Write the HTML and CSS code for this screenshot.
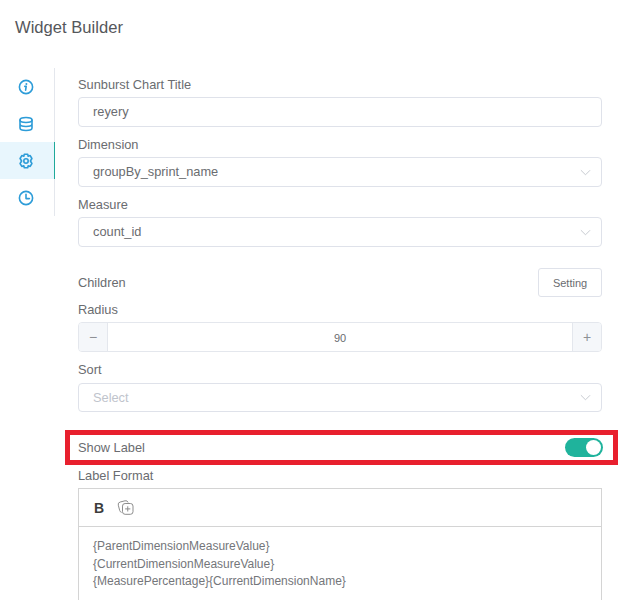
FILE: index.html
```html
<!DOCTYPE html>
<html lang="en">
<head>
<meta charset="utf-8">
<title>Widget Builder</title>
<link rel="stylesheet" href="styles.css">
</head>
<body>
<div class="page">
  <h1 class="title">Widget Builder</h1>
  <div class="builder">
    <nav class="side">
      <div class="side-item">
        <svg class="ico" viewBox="0 0 16 16"><circle cx="8" cy="8" r="6.6"/><path d="M8.200 7.400l-.6 3.800M6.800 7.400h1.400"/><circle class="dot" cx="8.400" cy="4.900" r="1"/></svg>
      </div>
      <div class="side-item">
        <svg class="ico" viewBox="0 0 16 16"><ellipse cx="8" cy="4" rx="6" ry="2.500"/><path d="M2 4v8c0 1.400 2.700 2.500 6 2.500s6-1.100 6-2.500V4M2 8c0 1.400 2.700 2.500 6 2.500S14 9.400 14 8"/></svg>
      </div>
      <div class="side-item active">
        <svg class="ico" viewBox="0 0 16 16"><path d="M6.300 1.200H9.700L10.200 3.200 12.200 2.600 13.900 5.500 12.400 8 13.900 10.500 12.200 13.400 10.200 12.800 9.700 14.800H6.300L5.800 12.800 3.800 13.400 2.100 10.500 3.600 8 2.100 5.500 3.800 2.600 5.800 3.200Z"/><circle cx="8" cy="8" r="2.200"/></svg>
      </div>
      <div class="side-item">
        <svg class="ico" viewBox="0 0 16 16"><circle cx="8" cy="8" r="6.600"/><path d="M8 4.300V8.600H11.400"/></svg>
      </div>
    </nav>
    <form class="form">
      <div class="field">
        <label class="label">Sunburst Chart Title</label>
        <div class="box">reyery</div>
      </div>
      <div class="field">
        <label class="label">Dimension</label>
        <div class="box select">groupBy_sprint_name<svg class="chev" viewBox="0 0 12 7"><path d="M1 1l5 5 5-5"/></svg></div>
      </div>
      <div class="field">
        <label class="label">Measure</label>
        <div class="box select">count_id<svg class="chev" viewBox="0 0 12 7"><path d="M1 1l5 5 5-5"/></svg></div>
      </div>
      <div class="children">
        <span class="label">Children</span>
        <button type="button" class="btn">Setting</button>
      </div>
      <div class="field radius">
        <label class="label">Radius</label>
        <div class="stepper">
          <span class="step minus">&minus;</span>
          <span class="value">90</span>
          <span class="step plus">+</span>
        </div>
      </div>
      <div class="field sort">
        <label class="label">Sort</label>
        <div class="box select placeholder">Select<svg class="chev" viewBox="0 0 12 7"><path d="M1 1l5 5 5-5"/></svg></div>
      </div>
      <div class="show-label">
        <span class="label">Show Label</span>
        <span class="switch"><span class="knob"></span></span>
      </div>
      <div class="format">
        <label class="label">Label Format</label>
        <div class="editor">
          <div class="toolbar">
            <b class="bold">B</b>
            <svg class="copy" viewBox="0 0 17 15"><path d="M4.600 12.400a2.600 2.600 0 0 1-1.900-1.900L1.300 5.200A2.600 2.600 0 0 1 3.200 2L8 .8a2.600 2.600 0 0 1 3.100 1.700"/><rect x="5.500" y="3.500" width="10.500" height="10.800" rx="2.600"/><path d="M10.750 6.300v5.200M8.150 8.900h5.200"/></svg>
          </div>
          <div class="content">
            <div>{ParentDimensionMeasureValue}</div>
            <div>{CurrentDimensionMeasureValue}</div>
            <div>{MeasurePercentage}{CurrentDimensionName}</div>
          </div>
        </div>
      </div>
    </form>
  </div>
</div>
</body>
</html>
```
FILE: styles.css
```css
* { box-sizing: border-box; }
html, body { margin: 0; height: 100%; overflow: hidden; background: #fff; }
body { font-family: "Liberation Sans", Arial, sans-serif; color: #6a6c70; }
.page { height: 600px; overflow: hidden; padding: 19px 0 0; }
.title { margin: 0 0 0 15px; font-size: 16.600px; line-height: 18px; font-weight: 400; color: #55575b; }
.builder { display: flex; margin-top: 31px; align-items: flex-start; }
.side { width: 55px; flex: none; border-right: 1px solid #e4e7ed; }
.side-item { height: 37px; display: flex; align-items: center; justify-content: center; margin-right: -1px; padding-right: 3px; border-right: 1px solid transparent; }
.side-item.active { background: #e8f6fd; border-right-color: #1fa99a; }
.ico { width: 16px; height: 16px; fill: none; stroke: #2d9cd8; stroke-width: 1.600; stroke-linejoin: round; stroke-linecap: round; }
.ico .dot { fill: #2d9cd8; stroke: none; }
.form { flex: none; width: 524px; margin-left: 23px; padding-top: 10px; }
.label { display: block; font-size: 12.800px; line-height: 14px; color: #6a6c70; }
.field { display: flex; flex-direction: column; gap: 5px; margin-bottom: 11px; }
.box { height: 30px; border: 1px solid #dfe2ea; border-radius: 4px; padding: 0 10px 0 14px; font-size: 12.800px; line-height: 28px; color: #6a6c70; display: flex; align-items: center; justify-content: space-between; }
.chev { width: 11px; height: 7px; fill: none; stroke: #c3c6cd; stroke-width: 1; }
.children { display: flex; align-items: center; justify-content: space-between; height: 29px; margin-top: 21px; margin-bottom: 6px; }
.btn { width: 64px; height: 29px; border: 1px solid #dfe2ea; border-radius: 3px; background: #fff; font: 11px "Liberation Sans", Arial, sans-serif; color: #6a6c70; padding: 0; }
.radius { margin-bottom: 11px; gap: 5px; }
.stepper { height: 30px; display: flex; border: 1px solid #e4e7ed; border-radius: 4px; overflow: hidden; font-size: 11px; color: #6a6c70; }
.step { width: 29px; flex: none; background: #f5f7fa; display: flex; align-items: center; justify-content: center; font-size: 14px; color: #8e9095; }
.minus { border-right: 1px solid #e4e7ed; }
.plus { border-left: 1px solid #e4e7ed; }
.value { flex: 1; text-align: center; line-height: 30px; }
.sort { margin-bottom: 18px; gap: 6px; }
.sort .box { height: 29px; }
.box.placeholder { color: #c0c4cc; }
.show-label { display: flex; align-items: center; justify-content: space-between; height: 35px; margin: 0 -16px 4px -13px; padding: 0 10px 0 8px; border: 5px solid #e8202e; }
.switch { width: 38px; height: 19px; background: #1fb39c; border-radius: 10px; display: flex; justify-content: flex-end; align-items: center; padding-right: 2px; }
.knob { width: 15px; height: 15px; border-radius: 50%; background: #fff; }
.format { display: flex; flex-direction: column; gap: 5px; }
.editor { border: 1px solid #d4d4d4; height: 200px; }
.toolbar { height: 38px; border-bottom: 1px solid #d4d4d4; display: flex; align-items: center; gap: 13px; padding-left: 15px; }
.bold { font-size: 14px; color: #3c3c3c; font-family: "Liberation Sans", Arial, sans-serif; }
.copy { width: 17px; height: 15px; fill: none; stroke: #8d8d8d; stroke-width: 1; }
.content { padding: 11px 14px; font-size: 12px; line-height: 17.500px; color: #74767a; }
```
